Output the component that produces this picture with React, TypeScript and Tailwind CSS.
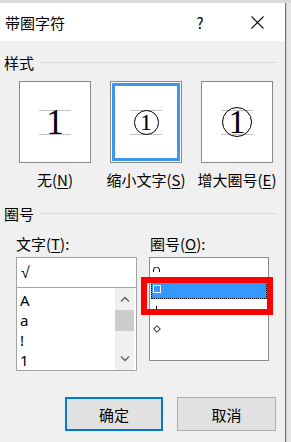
import React from 'react';

const cjk = { fontFamily: '"Noto Sans CJK SC", "Noto Sans", sans-serif' };

function SampleBox({ kind, selected }: { kind: 'none' | 'small' | 'big'; selected?: boolean }) {
  return (
    <div className="w-[72px] h-[82px] border border-[#8a8a8a] bg-white p-px">
      <div
        className={
          selected
            ? 'w-full h-full border-[3px] border-[#3c96f0] grid place-items-center'
            : 'w-full h-full grid place-items-center'
        }
      >
        <div className="col-start-1 row-start-1 w-[32px] h-[25px] border-y border-[#c4c4c4]" />
        {kind === 'none' && (
          <div className="col-start-1 row-start-1 text-[35px] leading-none" style={{ fontFamily: '"Liberation Serif", serif' }}>
            1
          </div>
        )}
        {kind === 'small' && (
          <div className="col-start-1 row-start-1 w-[25px] h-[25px] rounded-full border border-black flex items-center justify-center">
            <span className="text-[24px] leading-none" style={{ fontFamily: '"Liberation Serif", serif' }}>1</span>
          </div>
        )}
        {kind === 'big' && (
          <div className="col-start-1 row-start-1 w-[30px] h-[30px] rounded-full border border-black flex items-center justify-center">
            <span className="text-[34px] leading-none" style={{ fontFamily: '"Liberation Serif", serif' }}>1</span>
          </div>
        )}
      </div>
    </div>
  );
}

function Label({ text, k }: { text: string; k: string }) {
  return (
    <div className="w-[72px] flex justify-center whitespace-nowrap text-[15px] leading-[18px] text-black">
      {text}(<span className="underline underline-offset-2">{k}</span>)
    </div>
  );
}

export default function App() {
  return (
    <div className="w-[291px] h-[442px] bg-[#e4e4e4] overflow-hidden text-black" style={cjk}>
      <div className="h-[3px] bg-[#dadada]" />
      <div className="flex h-[439px]">
        <div className="w-[286px] h-full border-r border-[#2a7fd0] bg-[#f0f0f0] flex flex-col">
          {/* title bar */}
          <div className="h-[38px] bg-white flex items-center">
            <div className="pl-[5px] text-[15px] leading-none">带圈字符</div>
            <div className="ml-auto w-[40px] text-center text-[15px] leading-none">?</div>
            <div className="ml-[17px] mr-[8px] w-[40px] flex justify-center">
              <svg width="13" height="13" viewBox="0 0 13 13">
                <path d="M0.5 0.5 L12.5 12.5 M12.5 0.5 L0.5 12.5" stroke="#111" strokeWidth="1.1" />
              </svg>
            </div>
          </div>

          {/* 样式 */}
          <div className="mt-[12px] h-[18px] flex items-center pl-[4px] pr-[8px]">
            <span className="text-[15px] leading-none">样式</span>
            <div className="flex-1 ml-[6px] h-px bg-[#dcdcdc]" />
          </div>

          <div className="mt-[10px] pl-[19px] flex gap-[19px]">
            <SampleBox kind="none" />
            <SampleBox kind="small" selected />
            <SampleBox kind="big" />
          </div>
          <div className="mt-[8px] pl-[19px] flex gap-[19px]">
            <Label text="无" k="N" />
            <Label text="缩小文字" k="S" />
            <Label text="增大圈号" k="E" />
          </div>

          {/* 圈号 */}
          <div className="mt-[15px] h-[18px] flex items-center pl-[4px] pr-[8px]">
            <span className="text-[15px] leading-none">圈号</span>
            <div className="flex-1 ml-[6px] h-px bg-[#dcdcdc]" />
          </div>

          <div className="mt-[12px] flex">
            {/* left column */}
            <div className="ml-[16px] w-[121px] flex flex-col">
              <div className="h-[18px] flex items-center text-[15px] leading-none">
                文字(<span className="underline underline-offset-2">T</span>):
              </div>
              <div
                className="mt-[5px] h-[31px] border border-[#a3a3a3] bg-white flex items-center pl-[4px] text-[16px] leading-none"
                style={{ fontFamily: '"Liberation Sans", sans-serif' }}
              >
                √
              </div>
              <div className="-mt-px h-[84px] border border-[#a3a3a3] bg-white flex">
                <div className="flex-1 pt-[2px] pl-[3px] text-[15px]" style={{ fontFamily: '"Noto Sans", sans-serif' }}>
                  <div className="h-[20px] leading-[20px]">A</div>
                  <div className="h-[20px] leading-[20px]">a</div>
                  <div className="h-[20px] leading-[20px]">!</div>
                  <div className="h-[20px] leading-[20px]">1</div>
                </div>
                <div className="w-[19px] mr-[2px] bg-[#f0f0f0] flex flex-col items-center">
                  <div className="h-[22px] flex items-center">
                    <svg width="10" height="6" viewBox="0 0 10 6">
                      <path d="M1 5.5 L5 1.5 L9 5.5" fill="none" stroke="#606060" strokeWidth="1.3" />
                    </svg>
                  </div>
                  <div className="w-full h-[21px] bg-[#cdcdcd]" />
                  <div className="flex-1" />
                  <div className="h-[22px] flex items-center">
                    <svg width="10" height="6" viewBox="0 0 10 6">
                      <path d="M1 0.5 L5 4.5 L9 0.5" fill="none" stroke="#606060" strokeWidth="1.3" />
                    </svg>
                  </div>
                </div>
              </div>
            </div>

            {/* right column */}
            <div className="ml-[12px] w-[120px] flex flex-col relative">
              <div className="pl-[1px] h-[18px] flex items-center text-[15px] leading-none whitespace-nowrap">
                圈号(<span className="underline underline-offset-2">O</span>):
              </div>
              <div className="mt-[5px] h-[104px] border border-[#8c8c8c] bg-white p-px">
                <div className="h-[20px] flex items-start pl-[2px] pt-[8px] overflow-hidden">
                  <svg width="7" height="5" viewBox="0 0 7 5">
                    <path d="M0.5 5 L0.5 3 A3 3 0 0 1 6.5 3 L6.5 5" fill="none" stroke="#000" strokeWidth="1" />
                  </svg>
                </div>
                <div className="h-[20px] bg-[#3399ff] border border-dotted border-black flex items-center pl-[1px]">
                  <div className="w-[8px] h-[8px] border border-white" />
                </div>
                <div className="h-[20px] flex items-start pl-[2px] pt-[7px]">
                  <svg width="7" height="5" viewBox="0 0 7 5">
                    <path d="M3.5 0 L3.5 4 M0.5 4.5 L6.5 4.5" fill="none" stroke="#000" strokeWidth="1" />
                  </svg>
                </div>
                <div className="h-[20px] flex items-center pl-[2px]">
                  <svg width="8" height="8" viewBox="0 0 8 8">
                    <path d="M4 0.7 L7.3 4 L4 7.3 L0.7 4 Z" fill="none" stroke="#000" strokeWidth="1" />
                  </svg>
                </div>
              </div>
              {/* highlight */}
              <div className="absolute left-[-8px] top-[43px] w-[132px] h-[38px] border-[6px] border-[#ff0000]" />
            </div>
          </div>

          {/* buttons */}
          <div className="mt-[26px] pl-[65px] flex gap-[14px]">
            <div className="w-[98px] h-[34px] border-2 border-[#0078d7] bg-[#e1e1e1] flex items-center justify-center text-[15px] leading-none">
              确定
            </div>
            <div className="w-[99px] h-[34px] border border-[#adadad] bg-[#e1e1e1] flex items-center justify-center text-[15px] leading-none">
              取消
            </div>
          </div>
        </div>
        <div className="flex-1 bg-[#e6e6e6] border-l border-[#d0d0d0]" />
      </div>
    </div>
  );
}
